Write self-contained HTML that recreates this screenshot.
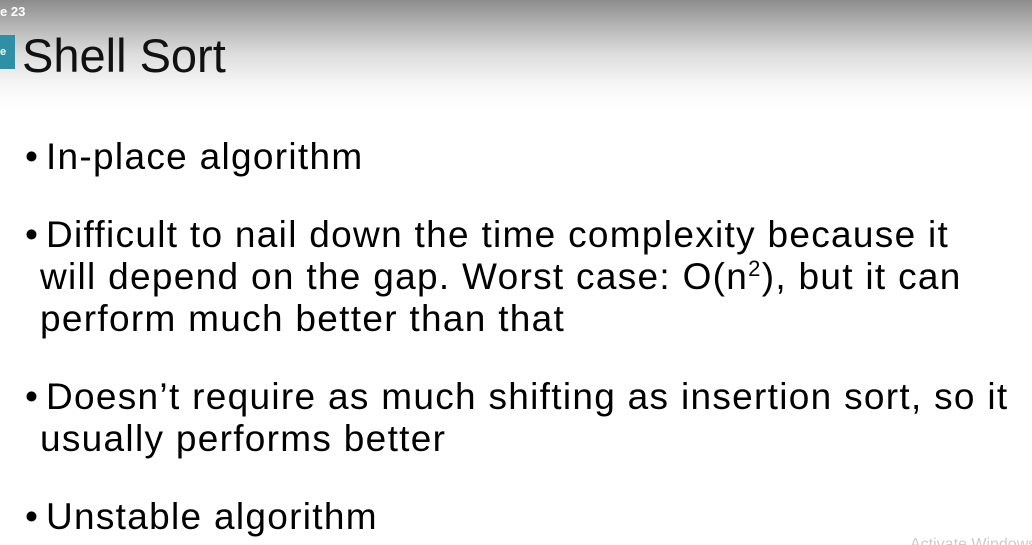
<!DOCTYPE html>
<html><head><style>
html,body{margin:0;width:1032px;height:545px;overflow:hidden;}
body{position:relative;font-family:"Liberation Sans",sans-serif;
background:linear-gradient(to bottom,#8c8c8c 0px,#b4b4b4 25px,#dedede 55px,#f6f6f6 85px,#fff 110px);}
.t{position:absolute;white-space:nowrap;color:#000;}
.b{font-size:37px;letter-spacing:1.3px;line-height:42px;}
.d{letter-spacing:0;margin-right:8px;}
sup{font-size:22px;line-height:0;vertical-align:0.6em;}
</style></head><body>
<div class="t" style="left:0;top:4px;color:#fff;font-size:13px;font-weight:bold">e 23</div>
<div style="position:absolute;left:0;top:35px;width:15px;height:34px;background:#2e8fa6;color:#fff;font-size:11px;font-weight:bold;line-height:34px">e</div>
<div class="t" style="left:22px;top:28px;font-size:47px;color:#111">Shell Sort</div>
<div class="t b" style="left:25px;top:136px"><span class="d">•</span>In-place algorithm</div>
<div class="t b" style="left:25px;top:214px"><span class="d">•</span>Difficult to nail down the time complexity because it<br><span style="padding-left:15px">will depend on the gap. Worst case: O(n<sup>2</sup>), but it can</span><br><span style="padding-left:15px">perform much better than that</span></div>
<div class="t b" style="left:25px;top:376px"><span class="d">•</span>Doesn’t require as much shifting as insertion sort, so it<br><span style="padding-left:15px">usually performs better</span></div>
<div class="t b" style="left:25px;top:496px"><span class="d">•</span>Unstable algorithm</div>
<div class="t" style="left:910px;top:537px;font-size:16px;color:#ccc;line-height:16px">Activate Windows</div>
</body></html>
